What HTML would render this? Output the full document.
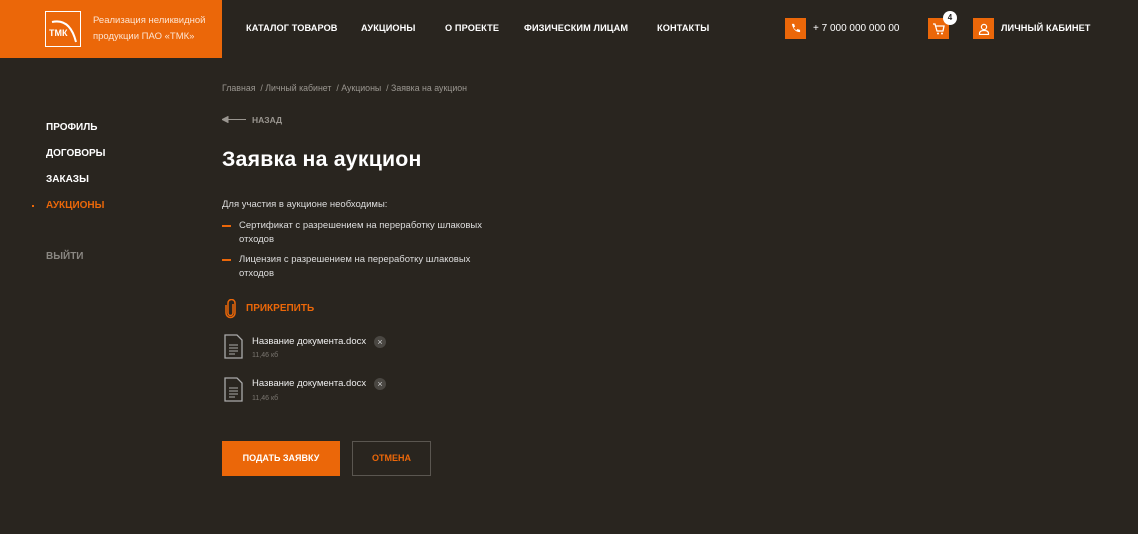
<!DOCTYPE html>
<html><head><meta charset="utf-8"><style>
*{margin:0;padding:0;box-sizing:border-box}
body{width:1138px;height:534px;background:#29251f;font-family:"Liberation Sans",sans-serif;color:#fff;position:relative;overflow:hidden}
.a{position:absolute;white-space:nowrap}
.logo{left:0;top:0;width:222px;height:58px;background:#eb6709}
.nav{font-size:9.2px;font-weight:bold;top:23px;letter-spacing:.1px}
.sq{width:21px;height:21px;background:#eb6709;display:flex;align-items:center;justify-content:center}
.side{left:46px;font-size:10px;font-weight:bold}
.sm{font-size:9.5px;color:#ddd}
.or{color:#eb6709}
</style></head><body>
<div class="a logo">
 <div class="a" style="left:45px;top:11px;width:36px;height:36px;border:1.5px solid #fff"><svg width="34" height="34" viewBox="0 0 34 34"><path d="M6 10 Q24 6 30 30" stroke="#fff" stroke-width="2" fill="none"/><text x="3" y="24" font-size="9" font-weight="bold" fill="#fff" font-family="Liberation Sans">ТМК</text></svg></div>
 <div class="a" style="left:93px;top:13px;font-size:9.5px;line-height:16px;color:#fde3d0">Реализация неликвидной<br>продукции ПАО «ТМК»</div>
</div>
<div class="a nav" style="left:246px">КАТАЛОГ ТОВАРОВ</div>
<div class="a nav" style="left:361px">АУКЦИОНЫ</div>
<div class="a nav" style="left:445px">О ПРОЕКТЕ</div>
<div class="a nav" style="left:524px">ФИЗИЧЕСКИМ ЛИЦАМ</div>
<div class="a nav" style="left:657px">КОНТАКТЫ</div>
<div class="a sq" style="left:785px;top:18px"><svg width="11" height="11" viewBox="0 0 12 12"><path d="M2 1l2.5 0 1 3-1.5 1q1 2 3 3l1-1.5 3 1v2.5q-7 0-9-9z" fill="#fff"/></svg></div>
<div class="a" style="left:813px;top:23px;font-size:10px">+ 7 000 000 000 00</div>
<div class="a sq" style="left:928px;top:18px"><svg width="13" height="12" viewBox="0 0 13 12"><path d="M1 1h2l2 7h6l1-5H4" stroke="#fff" stroke-width="1.3" fill="none"/><circle cx="6" cy="10.5" r="1" fill="#fff"/><circle cx="10" cy="10.5" r="1" fill="#fff"/></svg></div>
<div class="a" style="left:943px;top:11px;width:14px;height:14px;border-radius:50%;background:#fff;color:#222;font-size:8px;font-weight:bold;text-align:center;line-height:14px">4</div>
<div class="a sq" style="left:973px;top:18px"><svg width="12" height="12" viewBox="0 0 12 12"><circle cx="6" cy="4" r="2.6" stroke="#fff" stroke-width="1.2" fill="none"/><path d="M1.5 11.5v-1q0-3 4.5-3t4.5 3v1z" stroke="#fff" stroke-width="1.2" fill="none"/></svg></div>
<div class="a nav" style="left:1001px">ЛИЧНЫЙ КАБИНЕТ</div>

<div class="a side" style="top:122px">ПРОФИЛЬ</div>
<div class="a side" style="top:148px">ДОГОВОРЫ</div>
<div class="a side" style="top:174px">ЗАКАЗЫ</div>
<div class="a" style="left:32px;top:205px;width:2px;height:2px;background:#eb6709"></div>
<div class="a side or" style="top:200px">АУКЦИОНЫ</div>
<div class="a side" style="top:251px;color:#8a8782">ВЫЙТИ</div>

<div class="a" style="left:222px;top:83px;font-size:8.8px;color:#9a9690">Главная &nbsp;/ Личный кабинет &nbsp;/ Аукционы &nbsp;/ Заявка на аукцион</div>
<svg class="a" style="left:222px;top:116px" width="24" height="7"><path d="M0 3.5L6 0.5V6.5Z M5 3.5H24" stroke="#9a9690" fill="#9a9690"/></svg>
<div class="a" style="left:252px;top:115px;font-size:8.5px;font-weight:bold;color:#9a9690">НАЗАД</div>
<div class="a" style="left:222px;top:147px;font-size:21.3px;font-weight:bold;letter-spacing:.2px">Заявка на аукцион</div>
<div class="a sm" style="left:222px;top:199px">Для участия в аукционе необходимы:</div>
<div class="a" style="left:222px;top:225px;width:9px;height:1.5px;background:#eb6709"></div>
<div class="a sm" style="left:239px;top:219px;line-height:14px">Сертификат с разрешением на переработку шлаковых<br>отходов</div>
<div class="a" style="left:222px;top:259px;width:9px;height:1.5px;background:#eb6709"></div>
<div class="a sm" style="left:239px;top:253px;line-height:14px">Лицензия с разрешением на переработку шлаковых<br>отходов</div>

<svg class="a" style="left:225px;top:299px" width="12" height="20" viewBox="0 0 12 20"><path d="M8 5v9a2.5 2.5 0 0 1-5 0V4a3.5 3.5 0 0 1 7 0v10a4.5 4.5 0 0 1-9 0V6" stroke="#eb6709" stroke-width="1.5" fill="none"/></svg>
<div class="a or" style="left:246px;top:303px;font-size:10px;font-weight:bold">ПРИКРЕПИТЬ</div>

<svg class="a" style="left:224px;top:334px" width="19" height="25" viewBox="0 0 19 25"><path d="M1 1h12l5 5v18H1z" stroke="#aaa" stroke-width="1.3" fill="none"/><path d="M5 11h9M5 14h9M5 17h9M5 20h6" stroke="#aaa" stroke-width="1.1"/></svg>
<div class="a sm" style="left:252px;top:336px;color:#eee">Название документа.docx</div>
<div class="a" style="left:374px;top:336px;width:12px;height:12px;border-radius:50%;background:#4a4742;color:#ccc;font-size:9px;text-align:center;line-height:12px">×</div>
<div class="a" style="left:252px;top:352px;font-size:7px;color:#7a7670">11,46 кб</div>

<svg class="a" style="left:224px;top:377px" width="19" height="25" viewBox="0 0 19 25"><path d="M1 1h12l5 5v18H1z" stroke="#aaa" stroke-width="1.3" fill="none"/><path d="M5 11h9M5 14h9M5 17h9M5 20h6" stroke="#aaa" stroke-width="1.1"/></svg>
<div class="a sm" style="left:252px;top:378px;color:#eee">Название документа.docx</div>
<div class="a" style="left:374px;top:378px;width:12px;height:12px;border-radius:50%;background:#4a4742;color:#ccc;font-size:9px;text-align:center;line-height:12px">×</div>
<div class="a" style="left:252px;top:395px;font-size:7px;color:#7a7670">11,46 кб</div>

<div class="a" style="left:222px;top:441px;width:118px;height:35px;background:#eb6709;font-size:9px;font-weight:bold;text-align:center;line-height:35px">ПОДАТЬ ЗАЯВКУ</div>
<div class="a or" style="left:352px;top:441px;width:79px;height:35px;border:1px solid #5a5650;font-size:9px;font-weight:bold;text-align:center;line-height:33px">ОТМЕНА</div>
</body></html>
